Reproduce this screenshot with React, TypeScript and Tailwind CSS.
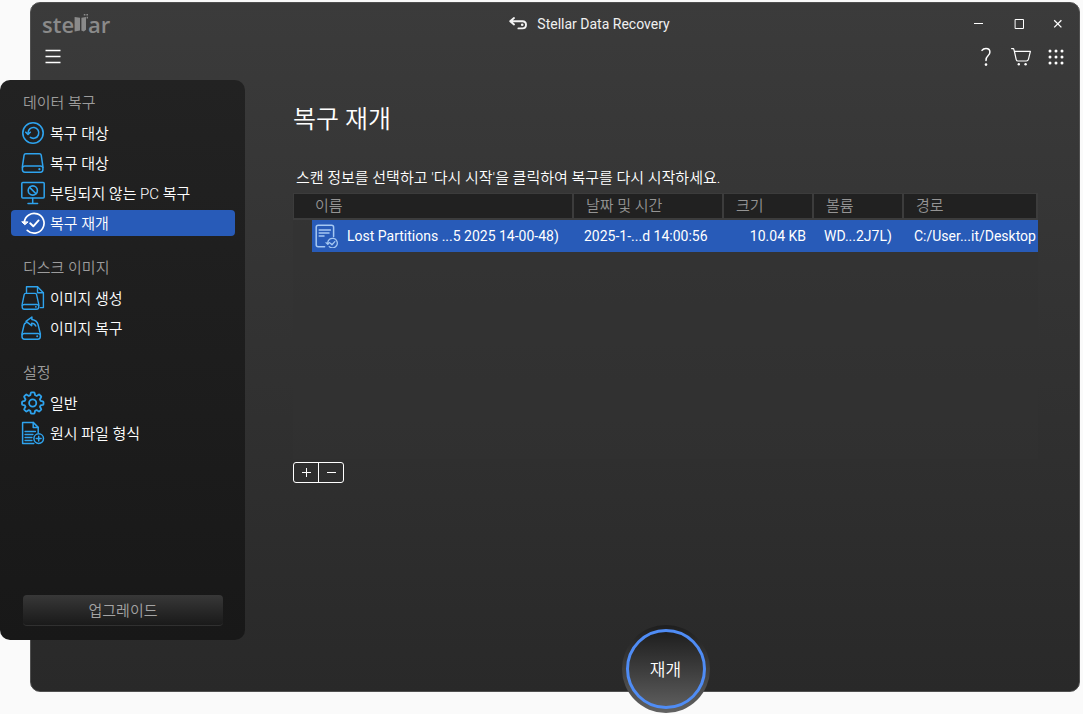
import React, { useState } from "react";

type IconProps = { className?: string };

type ScanInfo = {
  name: string;
  date: string;
  size: string;
  volume: string;
  path: string;
};

const strokeProps = {
  fill: "none",
  stroke: "currentColor",
  strokeLinecap: "round" as const,
  strokeLinejoin: "round" as const,
};

const TargetIcon = ({ className }: IconProps) => (
  <svg className={className} viewBox="0 0 24 24" {...strokeProps} strokeWidth={1.6}>
    <circle cx="12" cy="12" r="10.2" />
    <path d="M7 12.2A5.4 5.4 0 1 1 9.4 16.4" />
    <path d="M4.8 11.2L7 13.4L9.2 11.2" />
  </svg>
);

const DriveIcon = ({ className }: IconProps) => (
  <svg className={className} viewBox="0 0 24 24" {...strokeProps} strokeWidth={1.5}>
    <path d="M4.8 2.7H18.4Q20 2.7 20.2 4.2L21.9 15.4V18.6Q21.9 21.2 19.4 21.2H3.9Q1.4 21.2 1.4 18.6V15.4L3.1 4.2Q3.3 2.7 4.8 2.7Z" />
    <path d="M1.5 16.6Q2 15.1 3.8 15.1H19.5Q21.3 15.1 21.8 16.6" />
    <circle cx="18.4" cy="18.2" r="1.1" fill="currentColor" stroke="none" />
  </svg>
);

const MonitorIcon = ({ className }: IconProps) => (
  <svg className={className} viewBox="0 0 24 24" {...strokeProps} strokeWidth={1.5}>
    <rect x="0.8" y="1.6" width="22.4" height="15.4" rx="1" />
    <path d="M11.7 17.3V21.8M7 22.4H16.6" />
    <circle cx="11.8" cy="9.5" r="4.6" strokeWidth={1.6} />
    <path d="M8.6 6.4L15 12.7" strokeWidth={1.6} />
  </svg>
);

const ResumeIcon = ({ className }: IconProps) => (
  <svg className={className} viewBox="0 0 24 24" {...strokeProps} strokeWidth={1.7}>
    <path d="M3.3 11.2A9.9 9.9 0 1 1 6.3 19.4" />
    <path d="M1 11L3.8 13.8L6.8 11.2Z" fill="currentColor" strokeWidth={1} />
    <path d="M9.2 12.3L12.3 15.3L17.6 9.4" strokeWidth={1.9} />
  </svg>
);

const CreateImageIcon = ({ className }: IconProps) => (
  <svg className={className} viewBox="0 0 24 24" {...strokeProps} strokeWidth={1.4}>
    <path d="M5.5 6.4V0.8H16.5L22.4 6.7V21.6H19.2" />
    <path d="M16.5 0.8V6.7H22.4" />
    <path d="M4.6 7.4H14.2Q15.4 7.4 15.6 8.6L17.7 18.2V21Q17.7 23.2 15.5 23.2H3.4Q1.2 23.2 1.2 21V18.2L3.2 8.6Q3.4 7.4 4.6 7.4Z" />
    <path d="M1.3 19.6Q1.7 18.5 3.2 18.5H15.8Q17.3 18.5 17.7 19.6" />
    <circle cx="14.9" cy="20.8" r="0.9" fill="currentColor" stroke="none" />
  </svg>
);

const RestoreImageIcon = ({ className }: IconProps) => (
  <svg className={className} viewBox="0 0 24 24" {...strokeProps} strokeWidth={1.5}>
    <path d="M4.8 7Q3.4 7.4 3.1 8.8L1 17.6V20.6Q1 23.2 3.5 23.2H16.8Q19.3 23.2 19.3 20.6V17.6L17 8.4Q16 4.2 10.9 3.4V1L5 5.4L10.7 9.6V7.2Q13.4 7.2 14.8 10" />
    <path d="M1.2 18.7Q1.7 17.4 3.1 17.4H17Q18.6 17.4 19.2 18.7" />
    <circle cx="16.2" cy="20.3" r="1" fill="currentColor" stroke="none" />
  </svg>
);

const GearIcon = ({ className }: IconProps) => (
  <svg className={className} viewBox="0 0 24 24" {...strokeProps} strokeWidth={1.8}>
    <path d="M9.3 4.2L9.8 2Q10 1.3 10.7 1.3H12.7Q13.4 1.3 13.6 2L14.1 4.2Q15 4.6 15.6 4.9L17.5 3.7Q18.1 3.3 18.6 3.8L20 5.2Q20.5 5.7 20.1 6.3L18.9 8.3L19.6 9.8L21.8 10.3Q22.5 10.5 22.5 11.2V12.9Q22.5 13.6 21.8 13.8L19.6 14.3L18.9 15.8L20.1 17.8Q20.5 18.4 20 18.9L18.6 20.2Q18.1 20.7 17.5 20.3L15.6 19.1L14.1 19.8L13.6 22Q13.4 22.7 12.7 22.7H10.7Q10 22.7 9.8 22L9.3 19.8L7.8 19.1L5.9 20.3Q5.3 20.7 4.8 20.2L3.4 18.9Q2.9 18.4 3.3 17.8L4.5 15.8L3.8 14.3L1.7 13.8Q1 13.6 1 12.9V11.2Q1 10.5 1.7 10.3L3.8 9.8L4.5 8.3L3.3 6.3Q2.9 5.7 3.4 5.2L4.8 3.8Q5.3 3.3 5.9 3.7L7.8 4.9Z" />
    <circle cx="11.7" cy="12" r="3.6" />
  </svg>
);

const RawFileIcon = ({ className }: IconProps) => (
  <svg className={className} viewBox="0 0 24 24" {...strokeProps} strokeWidth={1.5}>
    <path d="M12.8 22.4H1.6V1.4H12.2L17.2 6.4V11.8" />
    <path d="M12.2 1.4V6.4H17.2" />
    <path d="M4 10.5H14.4M4 13.5H12M4 16.5H11M4 19.5H11" strokeWidth={1.3} />
    <circle cx="17.7" cy="17.6" r="4.8" />
    <path d="M17.7 15.2V20M15.3 17.6H20.1" />
  </svg>
);

const ScanFileIcon = ({ className }: IconProps) => (
  <svg className={className} viewBox="0 0 24 24" {...strokeProps} strokeWidth={1.5}>
    <path d="M9.6 22.8H3.2Q1.2 22.8 1.2 20.8V3.2Q1.2 1.2 3.2 1.2H16.6Q18.6 1.2 18.6 3.2V12.6" />
    <path d="M4.2 6H15.4M4.2 9H14M4.2 12H9" />
    <path d="M12.7 19.2A4.8 4.8 0 1 1 14.2 22.6M11 18.6L12.8 20.4L14.4 18.6" strokeWidth={1.3} />
    <path d="M15.4 19.2L17 20.8L19.8 17.6" strokeWidth={1.3} />
  </svg>
);

const sections = [
  {
    title: "데이터 복구",
    items: [
      { id: "recover", label: "복구 대상", Icon: TargetIcon },
      { id: "drive", label: "복구 대상", Icon: DriveIcon },
      { id: "unbootable", label: "부팅되지 않는 PC 복구", Icon: MonitorIcon },
      { id: "resume", label: "복구 재개", Icon: ResumeIcon },
    ],
  },
  {
    title: "디스크 이미지",
    items: [
      { id: "create-image", label: "이미지 생성", Icon: CreateImageIcon },
      { id: "restore-image", label: "이미지 복구", Icon: RestoreImageIcon },
    ],
  },
  {
    title: "설정",
    items: [
      { id: "general", label: "일반", Icon: GearIcon },
      { id: "raw", label: "원시 파일 형식", Icon: RawFileIcon },
    ],
  },
];

const scans: ScanInfo[] = [
  {
    name: "Lost Partitions ...5 2025 14-00-48)",
    date: "2025-1-...d 14:00:56",
    size: "10.04 KB",
    volume: "WD...2J7L)",
    path: "C:/User...it/Desktop",
  },
];

const TitleBar = () => (
  <header className="flex h-[42px] items-center pr-px">
    <div className="flex w-[190px] items-center pl-[11px] font-['Open_Sans',sans-serif] text-[22px] font-semibold leading-6 text-[#8a8a8a]">
      ste
      <svg className="h-6 w-[14px]" viewBox="0 0 14 24" fill="currentColor">
        <path d="M0.6 5L6 5.8V18.6L0.6 19.4Z" />
        <path d="M7.4 5.8L12 5V17.8L9.8 19.4L7.4 18.6Z" />
        <path d="M9.8 2H11.4V3.6H9.8ZM12.4 2H14V3.6H12.4ZM12.6 4.8H14V6.4H12.6Z" />
      </svg>
      ar
    </div>
    <div className="flex flex-1 items-center justify-center gap-2.5">
      <svg className="h-4 w-[18px]" viewBox="0 0 18 16" {...strokeProps} stroke="#f2f2f2" strokeWidth={1.9}>
        <path d="M5 2L1.2 5.2L5 8.4M1.6 5.2H13.4Q17 5.2 17 8.8Q17 12.4 13.4 12.4H9.4" />
        <circle cx="13.2" cy="8.8" r="1.3" fill="#f2f2f2" stroke="none" />
      </svg>
      <h1 className="text-sm text-[#f0f0f0]">Stellar Data Recovery</h1>
    </div>
    <button aria-label="최소화" className="flex h-8 w-10 items-center justify-center">
      <svg className="size-3" viewBox="0 0 12 12" {...strokeProps} strokeLinecap="butt">
        <path d="M2 5.5H11" />
      </svg>
    </button>
    <button aria-label="최대화" className="flex h-8 w-10 items-center justify-center">
      <svg className="size-3" viewBox="0 0 12 12" {...strokeProps} strokeLinejoin="miter">
        <path d="M3.5 1.5H11.5V10.5H3.5Z" />
      </svg>
    </button>
    <button aria-label="닫기" className="flex h-8 w-10 items-center justify-center">
      <svg className="size-3" viewBox="0 0 12 12" {...strokeProps} strokeLinecap="butt" strokeWidth={1.3}>
        <path d="M2.2 2.2L9.4 9.4M9.4 2.2L2.2 9.4" />
      </svg>
    </button>
  </header>
);

const Toolbar = () => (
  <div className="mb-[11px] flex h-6 items-center pl-2.5 pr-1.5">
    <button aria-label="메뉴" className="mr-auto flex size-6 items-center justify-center">
      <svg className="size-4" viewBox="0 0 16 16" stroke="currentColor" strokeWidth={1.3}>
        <path d="M0.5 1.5H15.5M0.5 7.5H15.5M0.5 13.5H15.5" />
      </svg>
    </button>
    <button aria-label="도움말" className="flex h-6 w-[35px] items-center justify-center">
      <svg className="h-5 w-3" viewBox="0 0 12 20" {...strokeProps} strokeWidth={1.5}>
        <path d="M2 3.4Q3.2 1.4 6 1.4Q9.9 1.4 9.9 5Q9.9 7.2 8 8.8Q6 10.6 6 13.4" />
        <circle cx="6" cy="17.6" r="1.3" fill="currentColor" stroke="none" />
      </svg>
    </button>
    <button aria-label="구매" className="flex h-6 w-[35px] items-center justify-center">
      <svg className="size-5" viewBox="0 0 20 20" {...strokeProps} strokeWidth={1.2}>
        <path d="M0.6 1.6H2.6L3.4 4.4M3.4 4.4H19.4L17.4 12.4Q17 14 15.4 14H7Q5.6 14 5.2 12.6L3.4 4.4" />
        <circle cx="7.8" cy="17.2" r="1.2" fill="currentColor" stroke="none" />
        <circle cx="14.6" cy="17.2" r="1.2" fill="currentColor" stroke="none" />
      </svg>
    </button>
    <button aria-label="더 보기" className="flex h-6 w-[35px] items-center justify-center">
      <svg className="size-4" viewBox="0 0 16 16" fill="currentColor">
        {[2, 8, 14].map((y) =>
          [2, 8, 14].map((x) => <circle key={`${x}-${y}`} cx={x} cy={y} r="1.5" />)
        )}
      </svg>
    </button>
  </div>
);

const App: React.FC = () => {
  const [active, setActive] = useState<string>("resume");
  const [selected, setSelected] = useState<number>(0);

  return (
    <div className="flex min-h-screen flex-col bg-[#fafafa] pb-[22px] pl-[30px] pr-[3px] pt-0.5 font-['Roboto','Noto_Sans_CJK_KR',sans-serif] text-white">
      <div className="flex flex-1 flex-col rounded-[10px] border border-[#505050] bg-linear-to-b from-[#3b3b3b] to-[#292929]">
        <TitleBar />
        <Toolbar />
        <div className="flex flex-1">
          <aside className="mb-[51px] -ml-[31px] flex w-[245px] shrink-0 flex-col rounded-[10px] bg-linear-to-b from-[#222222] to-[#181818] pb-3.5 pl-[11px] pr-2.5 pt-3">
            <nav className="flex flex-col gap-[21px]">
              {sections.map((section) => (
                <div key={section.title}>
                  <h2 className="mb-1.5 pl-3 text-[15px] font-[350] leading-[22px] text-[#9c9c9c]">
                    {section.title}
                  </h2>
                  <ul className="flex flex-col gap-1">
                    {section.items.map(({ id, label, Icon }) => (
                      <li key={id}>
                        <button
                          onClick={() => setActive(id)}
                          className={`flex h-[26px] w-full items-center gap-[5px] rounded-sm pl-2.5 text-[15px] font-[350] ${
                            active === id ? "bg-[#285bb8]" : ""
                          }`}
                        >
                          <Icon
                            className={`size-6 ${
                              active === id ? "text-white" : "text-[#2ea3ee]"
                            }`}
                          />
                          <span className="pt-0.5">{label}</span>
                        </button>
                      </li>
                    ))}
                  </ul>
                </div>
              ))}
            </nav>
            <button className="mx-3 mt-auto h-[31px] rounded-sm border-b border-[#303030] bg-linear-to-b from-[#383838] to-[#1a1a1a] pt-0.5 text-[15px] font-[350] text-[#a4a4a4]">
              업그레이드
            </button>
          </aside>

          <main className="flex flex-1 flex-col pl-12 pr-[41px] pt-6">
            <h2 className="text-[25px] font-[350] leading-8">복구 재개</h2>
            <p className="mt-[31px] pl-[3px] text-[15px] font-[350] leading-[22px]">
              스캔 정보를 선택하고 '다시 시작'을 클릭하여 복구를 다시 시작하세요.
            </p>
            <div className="mt-1 flex-1 bg-[#313131]/50">
              <table className="w-full table-fixed border-separate border-spacing-0 text-left text-sm">
                <thead>
                  <tr className="h-[27px] bg-[#212121] text-[15px] text-[#949494] *:border-y *:border-r-2 *:border-b-2 *:border-[#3c3c3c] *:p-0 *:pt-px *:font-[350] *:leading-[23px]">
                    <th className="w-[281px] border-l">
                      <span className="pl-[21px]">이름</span>
                    </th>
                    <th className="w-[150px]">
                      <span className="pl-3">날짜 및 시간</span>
                    </th>
                    <th className="w-[90px]">
                      <span className="pl-3">크기</span>
                    </th>
                    <th className="w-[90px]">
                      <span className="pl-3">볼륨</span>
                    </th>
                    <th>
                      <span className="pl-3">경로</span>
                    </th>
                  </tr>
                </thead>
                <tbody>
                  {scans.map((scan, index) => {
                    const rowColor = selected === index ? "bg-[#285bb8]" : "";
                    return (
                      <tr
                        key={scan.date}
                        onClick={() => setSelected(index)}
                        className="whitespace-nowrap *:p-0"
                      >
                        <td>
                          <div className={`ml-[19px] flex h-8 items-center gap-2 pl-[3px] ${rowColor}`}>
                            <ScanFileIcon className="size-6 shrink-0 text-[#a5c8f2]" />
                            {scan.name}
                          </div>
                        </td>
                        <td className={rowColor}>
                          <span className="pl-2.5">{scan.date}</span>
                        </td>
                        <td className={`text-right ${rowColor}`}>
                          <span className="pr-2">{scan.size}</span>
                        </td>
                        <td className={rowColor}>
                          <span className="pl-2.5">{scan.volume}</span>
                        </td>
                        <td className={rowColor}>
                          <span className="pl-2.5">{scan.path}</span>
                        </td>
                      </tr>
                    );
                  })}
                </tbody>
              </table>
            </div>
            <div className="mt-[3px] flex h-[21px] w-[51px] self-start rounded-[3px] border border-white">
              <button aria-label="추가" className="flex flex-1 items-center justify-center border-r border-white">
                <svg className="size-[9px]" viewBox="0 0 9 9" stroke="currentColor">
                  <path d="M0 4.5H9M4.5 0V9" />
                </svg>
              </button>
              <button aria-label="제거" className="flex flex-1 items-center justify-center">
                <svg className="size-[9px]" viewBox="0 0 9 9" stroke="currentColor">
                  <path d="M0 4.5H9" />
                </svg>
              </button>
            </div>
            <div className="mt-[142px] -mb-[22px] size-[88px] self-center rounded-full bg-linear-to-b from-[#1e1e1e] to-[#626262] p-1">
              <button className="size-full rounded-full border-3 border-[#4f8cf5] bg-linear-to-b from-[#1f1f1f] to-[#5c5c5c] pt-1 text-[17px] font-[350]">
                재개
              </button>
            </div>
          </main>
        </div>
      </div>
    </div>
  );
};

export default App;
